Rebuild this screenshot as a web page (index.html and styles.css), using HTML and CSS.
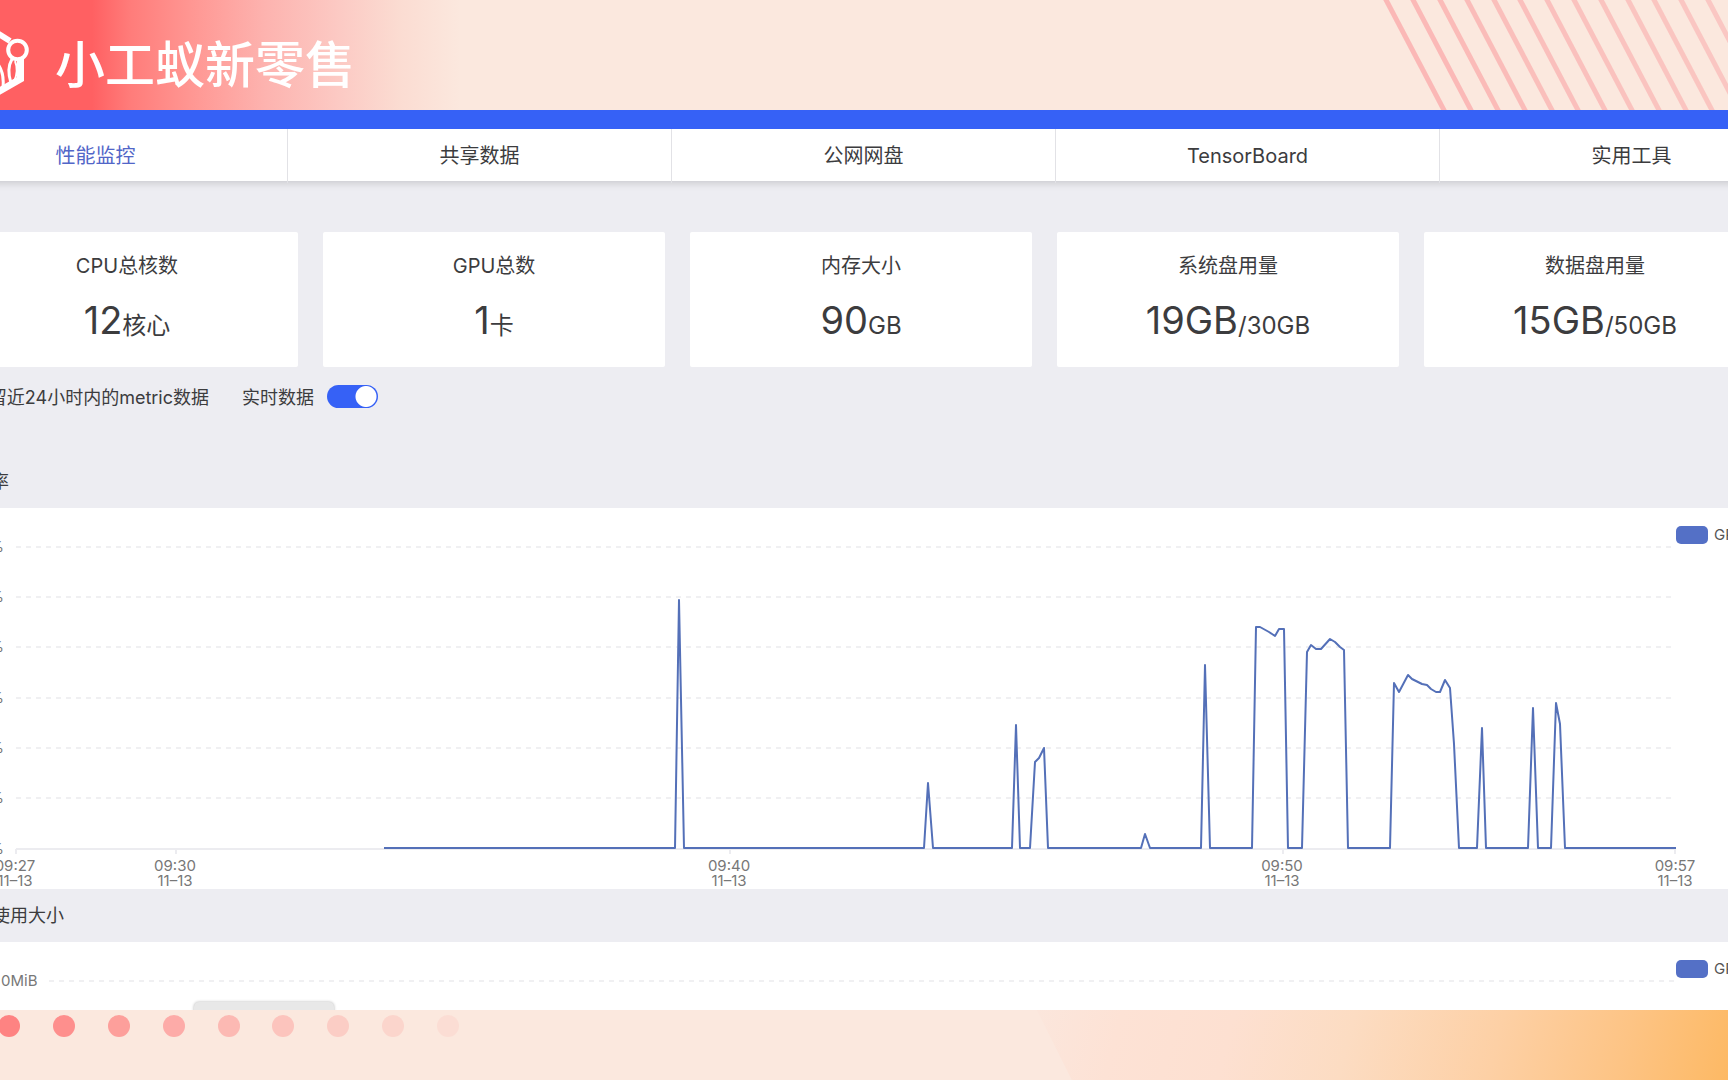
FILE: index.html
```html
<!DOCTYPE html>
<html lang="zh-CN">
<head>
<meta charset="utf-8">
<meta name="viewport" content="width=device-width, initial-scale=1">
<title>小工蚁新零售 - 性能监控</title>
<link rel="stylesheet" href="styles.css">
</head>
<body>
<div class="frame">
  <header class="banner">
    <svg class="logo" viewBox="0 0 32 84" fill="none" stroke="#fff" aria-hidden="true">
      <path d="M-6 11 L10 21" stroke-width="6"/>
      <circle cx="17.500" cy="30" r="9.300" stroke-width="4"/>
      <path d="M20.500 39 V59 L-4 73" stroke-width="7"/>
      <path d="M12 39 C8 46 8 54 11 63" stroke-width="3"/>
      <path d="M15 41 C18 48 17 55 14 62" stroke-width="2"/>
      <path d="M-3 43 C2 49 4 57 3 67" stroke-width="3"/>
    </svg>
    <h1 class="brand">小工蚁新零售</h1>
    <svg class="stripes" viewBox="0 0 348 110" fill="none" stroke="#fa7b83" stroke-width="5" aria-hidden="true">
      <path d="M4 -4 L66 114" opacity=".44"/>
      <path d="M31 -4 L93 114" opacity=".43"/>
      <path d="M58 -4 L120 114" opacity=".42"/>
      <path d="M85 -4 L147 114" opacity=".4"/>
      <path d="M112 -4 L174 114" opacity=".38"/>
      <path d="M138 -4 L200 114" opacity=".37"/>
      <path d="M165 -4 L227 114" opacity=".36"/>
      <path d="M192 -4 L254 114" opacity=".35"/>
      <path d="M219 -4 L281 114" opacity=".34"/>
      <path d="M246 -4 L308 114" opacity=".33"/>
      <path d="M272 -4 L334 114" opacity=".32"/>
      <path d="M299 -4 L361 114" opacity=".31"/>
      <path d="M326 -4 L388 114" opacity=".3"/>
    </svg>
  </header>

  <main class="app">
    <nav class="tabs">
      <a class="tab tab-active" href="#monitor">性能监控</a>
      <a class="tab" href="#share">共享数据</a>
      <a class="tab" href="#disk">公网网盘</a>
      <a class="tab" href="#tensorboard">TensorBoard</a>
      <a class="tab" href="#tools">实用工具</a>
    </nav>

    <section class="cards">
      <div class="card"><h2 class="card-title">CPU总核数</h2><p class="value">12<span class="unit">核心</span></p></div>
      <div class="card"><h2 class="card-title">GPU总数</h2><p class="value">1<span class="unit">卡</span></p></div>
      <div class="card"><h2 class="card-title">内存大小</h2><p class="value">90<span class="unit">GB</span></p></div>
      <div class="card"><h2 class="card-title">系统盘用量</h2><p class="value">19GB<span class="unit">/30GB</span></p></div>
      <div class="card"><h2 class="card-title">数据盘用量</h2><p class="value">15GB<span class="unit">/50GB</span></p></div>
    </section>

    <div class="options">
      <p class="note">留近24小时内的metric数据</p>
      <label class="live" for="live">实时数据</label>
      <input class="switch" id="live" type="checkbox" role="switch" checked>
    </div>

    <h2 class="chart-title chart-title-first"><span class="clip-one">率</span></h2>
    <svg class="chart" viewBox="0 0 1728 381" role="img" aria-label="GPU 使用率">
      <path class="grid" d="M16 39H1676M16 89H1676M16 139H1676M16 190H1676M16 240H1676M16 290H1676"/>
      <path class="axis" d="M16 341H1676M16 341V346M176 341V346M730 341V346M1283 341V346M1675 341V346"/>
      <g class="label" text-anchor="end">
        <text x="4" y="44">%</text><text x="4" y="94">%</text><text x="4" y="144">%</text><text x="4" y="195">%</text>
        <text x="4" y="245">%</text><text x="4" y="295">%</text><text x="4" y="346">%</text>
      </g>
      <g class="label" text-anchor="middle">
        <text x="15" y="363">09:27</text><text x="15" y="378">11–13</text>
        <text x="175" y="363">09:30</text><text x="175" y="378">11–13</text>
        <text x="729" y="363">09:40</text><text x="729" y="378">11–13</text>
        <text x="1282" y="363">09:50</text><text x="1282" y="378">11–13</text>
        <text x="1675" y="363">09:57</text><text x="1675" y="378">11–13</text>
      </g>
      <polyline class="series" points="384,340 675,340 679,92 684,340 924,340 928,275 933,340 1012,340 1016,217 1020,340 1030,340 1035,254 1039,250 1044,240 1048,340 1141,340 1145,326 1150,340 1201,340 1205,157 1210,340 1252,340 1256,119 1260,119 1269,124 1275,128 1279,121 1284,121 1288,340 1302,340 1307,144 1311,137 1316,141 1321,141 1330,131 1335,134 1340,139 1344,142 1348,340 1390,340 1394,175 1399,184 1408,167 1412,171 1422,176 1427,177 1431,181 1436,184 1440,184 1445,172 1450,180 1454,236 1459,340 1477,340 1482,220 1486,340 1528,340 1533,200 1538,340 1551,340 1556,195 1560,216 1565,340 1676,340"/>
      <rect class="swatch" x="1676" y="18" width="32" height="18" rx="5"/>
      <text class="legend" x="1714" y="32">GPU</text>
    </svg>

    <h2 class="chart-title"><span class="clip-four">使用大小</span></h2>
    <div class="panel">
      <svg class="chart" viewBox="0 0 1728 381" role="img" aria-label="显存使用大小">
        <path class="grid" d="M49 39H1676"/>
        <text class="label" x="1" y="44">0MiB</text>
        <rect class="swatch" x="1676" y="18" width="32" height="18" rx="5"/>
        <text class="legend" x="1714" y="32">GPU</text>
      </svg>
      <div class="popup">截图工具</div>
    </div>
  </main>

  <footer class="footer">
    <svg class="dots" viewBox="0 0 480 70" fill="#ff6265" aria-hidden="true">
      <circle cx="9" cy="16" r="11" opacity=".76"/>
      <circle cx="64" cy="16" r="11" opacity=".67"/>
      <circle cx="119" cy="16" r="11" opacity=".55"/>
      <circle cx="174" cy="16" r="11" opacity=".45"/>
      <circle cx="229" cy="16" r="11" opacity=".35"/>
      <circle cx="283" cy="16" r="11" opacity=".27"/>
      <circle cx="338" cy="16" r="11" opacity=".2"/>
      <circle cx="393" cy="16" r="11" opacity=".14"/>
      <circle cx="448" cy="16" r="11" opacity=".08"/>
    </svg>
    <div class="glow"></div>
  </footer>
</div>
</body>
</html>
```
FILE: styles.css
```css
* { box-sizing: border-box; }

body {
  margin: 0;
  color: #3c3c3e;
  font-family: Inter, "Noto Sans CJK SC", sans-serif;
}

h1, h2, p { margin: 0; font-weight: 400; }

.frame {
  display: flex;
  flex-direction: column;
  height: 100vh;
  overflow: hidden;
}

/* Banner */
.banner {
  display: flex;
  flex: none;
  align-items: flex-start;
  height: 110px;
  overflow: hidden;
  background: linear-gradient(90deg, #ff6062 0, #ff6062 92px, #ff7c7a 130px, #ff9692 190px, #fdb3af 265px, #fccac4 340px, #fbdcd2 400px, #fbe8de 460px);
}

.logo { flex: none; width: 32px; height: 84px; margin-top: 20px; }

.brand {
  flex: 1;
  padding-left: 23px;
  color: #fff;
  font-size: 50px;
  font-weight: 500;
  line-height: 130px;
  white-space: nowrap;
}

.stripes { flex: none; width: 348px; height: 110px; }

/* Application */
.app {
  flex: 1;
  min-height: 0;
  overflow: hidden;
  background: #ededf2;
  border-top: 19px solid #3661f6;
}

.tabs {
  display: grid;
  grid-template-columns: repeat(5, 1fr);
  height: 52px;
  margin: 0 -96px;
  background: #fff;
  box-shadow: 0 2px 8px rgba(0, 0, 0, .16);
}

.tab {
  border-right: 1px solid #e2e2e6;
  color: #3c3c3e;
  font-size: 20px;
  line-height: 54px;
  text-align: center;
  text-decoration: none;
}

.tab-active { color: #5266c8; }

.cards {
  display: grid;
  grid-template-columns: repeat(5, 1fr);
  gap: 25px;
  margin: 51px -38px 0 -44px;
}

.card {
  height: 135px;
  padding-top: 18px;
  border-radius: 2px;
  background: #fff;
  text-align: center;
}

.card-title { font-size: 20px; line-height: 32px; }
.value { margin-top: 10px; font-size: 38px; line-height: 56px; }
.unit { font-size: 24px; }

.options {
  display: flex;
  align-items: center;
  height: 58px;
  font-size: 18px;
}

.note {
  display: flex;
  justify-content: flex-end;
  width: 209px;
  overflow: hidden;
  white-space: nowrap;
}

.live { margin-left: 33px; }

.switch {
  width: 51px;
  height: 23px;
  margin: 0 0 0 13px;
  border-radius: 12px;
  appearance: none;
  background: radial-gradient(circle at 39px 50%, #fff 10px, transparent 11px) #3661f6;
}

.chart-title {
  height: 53px;
  font-size: 18px;
  line-height: 53px;
}

.chart-title-first { height: 83px; padding-top: 30px; }

.clip-one, .clip-four {
  display: flex;
  justify-content: flex-end;
  overflow: hidden;
  white-space: nowrap;
}

.clip-one { width: 9px; }
.clip-four { width: 64px; }

/* Charts */
.chart {
  display: block;
  width: 100%;
  height: auto;
  background: #fff;
  font-size: 15px;
}

.grid { fill: none; stroke: #f0f0f2; stroke-width: 2; stroke-dasharray: 5 5; }
.axis { fill: none; stroke: #ececf0; stroke-width: 2; }
.series { fill: none; stroke: #5470b8; stroke-width: 2; stroke-linejoin: round; }
.swatch { fill: #5470c6; }
.label { fill: #777; }
.legend { fill: #555; }

.panel { position: relative; }

.popup {
  position: absolute;
  top: 60px;
  left: 194px;
  width: 140px;
  padding: 4px 20px 4px 62px;
  border-radius: 5px;
  background: #e8e8e8;
  box-shadow: 0 0 3px rgba(0, 0, 0, .3);
  color: #888;
  font-size: 14px;
  white-space: nowrap;
}

/* Footer */
.footer {
  display: flex;
  flex: none;
  justify-content: space-between;
  height: 70px;
  background: #fbe8de;
}

.dots { flex: none; width: 480px; height: 70px; }

.glow {
  width: 40%;
  background: linear-gradient(105deg, #fbe6dc 0, #fde2d5 12%, #fde0d1 28%, #fcdcc2 45%, #fdd0a5 66%, #fdc485 84%, #fdb964 100%);
  clip-path: polygon(0 0, 100% 0, 100% 100%, 35px 100%);
}
```
